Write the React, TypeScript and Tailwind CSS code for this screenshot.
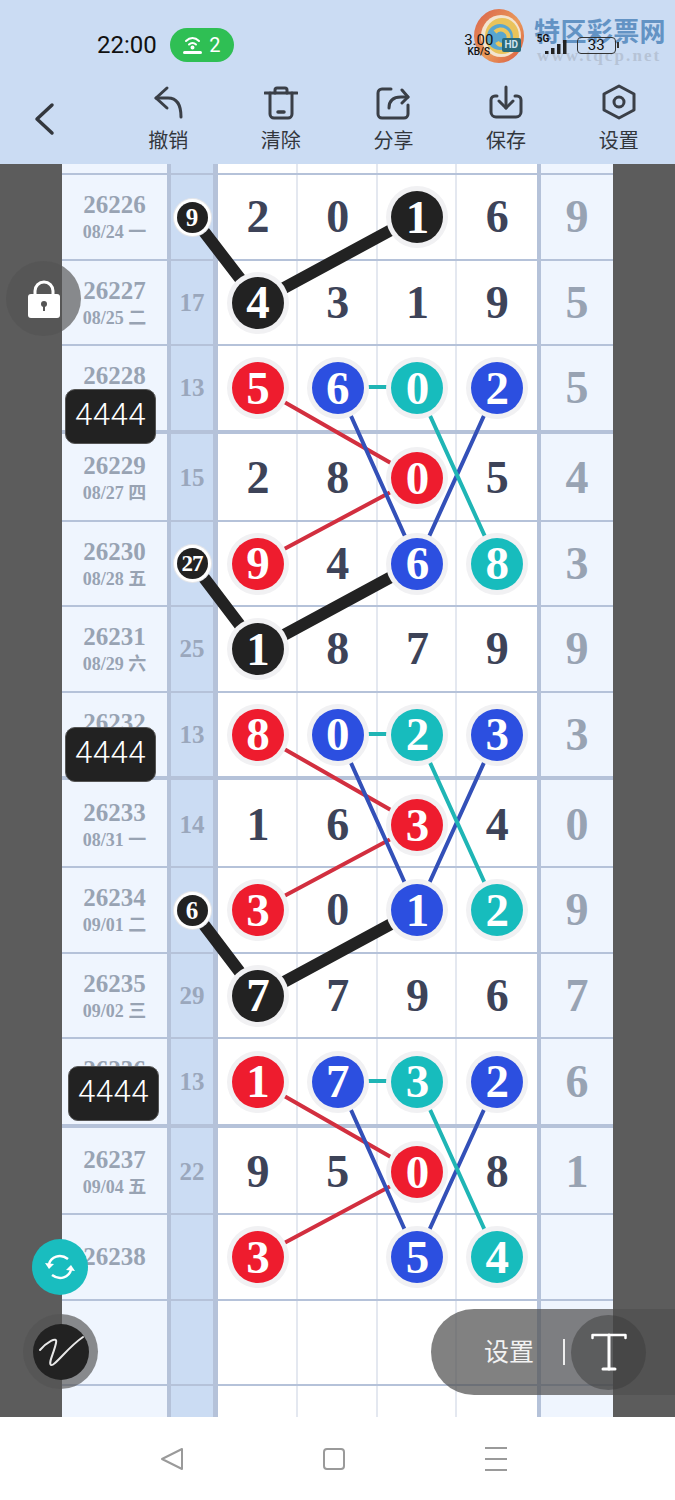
import React from "react";

type Color = "k" | "r" | "b" | "t";
type Cell = string | [string, Color];
type Row = {
  h: string;
  pad: string;
  thick?: boolean;
  id: string;
  date: string;
  sum: string;
  ball?: boolean;
  cells: Cell[];
  last: string;
};

const rows: Row[] = [
  { h: "h-[11px]", pad: "", id: "", date: "", sum: "", cells: ["", "", "", ""], last: "" },
  { h: "h-[86px]", pad: "", id: "26226", date: "08/24 一", sum: "9", ball: true, cells: ["2", "0", ["1", "k"], "6"], last: "9" },
  { h: "h-[85px]", pad: "", id: "26227", date: "08/25 二", sum: "17", cells: [["4", "k"], "3", "1", "9"], last: "5" },
  { h: "h-[88px]", pad: "", thick: true, id: "26228", date: "08/26 三", sum: "13", cells: [["5", "r"], ["6", "b"], ["0", "t"], ["2", "b"]], last: "5" },
  { h: "h-[88px]", pad: "pt-[2px]", id: "26229", date: "08/27 四", sum: "15", cells: ["2", "8", ["0", "r"], "5"], last: "4" },
  { h: "h-[85px]", pad: "", id: "26230", date: "08/28 五", sum: "27", ball: true, cells: [["9", "r"], "4", ["6", "b"], ["8", "t"]], last: "3" },
  { h: "h-[86px]", pad: "", id: "26231", date: "08/29 六", sum: "25", cells: [["1", "k"], "8", "7", "9"], last: "9" },
  { h: "h-[87px]", pad: "", thick: true, id: "26232", date: "08/30 日", sum: "13", cells: [["8", "r"], ["0", "b"], ["2", "t"], ["3", "b"]], last: "3" },
  { h: "h-[88px]", pad: "pt-[4px]", id: "26233", date: "08/31 一", sum: "14", cells: ["1", "6", ["3", "r"], "4"], last: "0" },
  { h: "h-[86px]", pad: "", id: "26234", date: "09/01 二", sum: "6", ball: true, cells: [["3", "r"], "0", ["1", "b"], ["2", "t"]], last: "9" },
  { h: "h-[85px]", pad: "", id: "26235", date: "09/02 三", sum: "29", cells: [["7", "k"], "7", "9", "6"], last: "7" },
  { h: "h-[89px]", pad: "", thick: true, id: "26236", date: "09/03 四", sum: "13", cells: [["1", "r"], ["7", "b"], ["3", "t"], ["2", "b"]], last: "6" },
  { h: "h-[87px]", pad: "pt-[3px]", id: "26237", date: "09/04 五", sum: "22", cells: ["9", "5", ["0", "r"], "8"], last: "1" },
  { h: "h-[86px]", pad: "", id: "26238", date: "", sum: "", cells: [["3", "r"], "", ["5", "b"], ["4", "t"]], last: "" },
  { h: "h-[85px]", pad: "", id: "", date: "", sum: "", cells: ["", "", "", ""], last: "" },
];

const ballColor: Record<Color, string> = {
  k: "bg-[#222222]",
  r: "bg-[#ee1c2e]",
  b: "bg-[#2c4fe0]",
  t: "bg-[#17bcbd]",
};

const SERIF = "font-['Liberation_Serif','Noto_Sans_CJK_SC',serif]";
const SANS = "font-['Roboto','Noto_Sans_CJK_SC',sans-serif]";

function Ball({ v, c }: { v: string; c: Color }) {
  return (
    <div
      className={`relative z-20 flex h-[52px] w-[52px] items-center justify-center rounded-full text-[47px] leading-none font-bold text-white shadow-[0_0_0_5px_#f1f1f3] ${ballColor[c]}`}
    >
      {v}
    </div>
  );
}

function TableRow({ row }: { row: Row }) {
  const bar = "bg-[#b5c2d9]";
  return (
    <div
      className={`box-border grid grid-cols-[105px_4px_42px_5px_319px_4px_72px] border-[#b5c2d9] ${row.h} ${
        row.thick ? "border-b-4" : "border-b-2"
      } ${SERIF}`}
    >
      <div className={`flex flex-col items-center justify-center bg-[#eff5fe] font-bold text-[#98a3b3] ${row.pad}`}>
        {row.id && <div className="text-[25px] leading-[30px]">{row.id}</div>}
        {row.date && <div className="text-[18px] leading-[24px]">{row.date}</div>}
      </div>
      <div className={bar} />
      <div className={`flex items-center justify-center bg-[#cbdcf3] text-[25px] font-bold text-[#9aa7bc] ${row.pad}`}>
        {row.ball ? (
          <div className="relative z-20 flex h-[31px] w-[31px] items-center justify-center rounded-full bg-[#222222] leading-none text-white shadow-[0_0_0_3px_#ffffff,0_0_0_4px_#e4e6ea]">
            <span className={row.sum.length > 1 ? "text-[23px] tracking-[-1px]" : "text-[25px]"}>{row.sum}</span>
          </div>
        ) : (
          row.sum
        )}
      </div>
      <div className={bar} />
      <div className="grid grid-cols-4 bg-white">
        {row.cells.map((cell, i) => (
          <div
            key={i}
            className={`flex items-center justify-center text-[46px] leading-none font-bold text-[#3d4358] ${row.pad} ${
              i < 3 ? "shadow-[inset_-2px_0_0_#e4e8f0]" : ""
            }`}
          >
            {typeof cell === "string" ? cell : <Ball v={cell[0]} c={cell[1]} />}
          </div>
        ))}
      </div>
      <div className={bar} />
      <div className={`flex items-center justify-center bg-[#eff5fe] text-[46px] leading-none font-bold text-[#98a3b3] ${row.pad}`}>
        {row.last}
      </div>
    </div>
  );
}

function BottomStub() {
  return (
    <div className="grid h-[31px] grid-cols-[105px_4px_42px_5px_319px_4px_72px]">
      <div className="bg-[#eff5fe]" />
      <div className="bg-[#b5c2d9]" />
      <div className="bg-[#cbdcf3]" />
      <div className="bg-[#b5c2d9]" />
      <div className="grid grid-cols-4 bg-white">
        <div className="shadow-[inset_-2px_0_0_#e4e8f0]" />
        <div className="shadow-[inset_-2px_0_0_#e4e8f0]" />
        <div className="shadow-[inset_-2px_0_0_#e4e8f0]" />
        <div />
      </div>
      <div className="bg-[#b5c2d9]" />
      <div className="bg-[#eff5fe]" />
    </div>
  );
}

function Lines() {
  const groups = [
    { k: [192, 216, 258, 302, 417, 216], r: [258, 387, 417, 478, 258, 563], b: [338, 387, 417, 563, 497, 387], t: [338, 387, 417, 387, 497, 563] },
    { k: [192, 562, 258, 649, 417, 563], r: [258, 734, 417, 825, 258, 910], b: [338, 734, 417, 910, 497, 734], t: [338, 734, 417, 734, 497, 910] },
    { k: [192, 909, 258, 996, 417, 910], r: [258, 1081, 417, 1172, 258, 1257], b: [338, 1081, 417, 1257, 497, 1081], t: [338, 1081, 417, 1081, 497, 1257] },
  ];
  return (
    <svg className="pointer-events-none absolute top-0 left-0 z-10" width="675" height="1500" fill="none">
      {groups.map((g, i) => (
        <g key={i}>
          <polyline points={g.k.join(" ")} stroke="#222222" strokeWidth="12" />
          <polyline points={g.r.join(" ")} stroke="#d22f3f" strokeWidth="4" />
          <polyline points={g.b.join(" ")} stroke="#3350b8" strokeWidth="4" />
          <polyline points={g.t.join(" ")} stroke="#1fb5b5" strokeWidth="4" />
        </g>
      ))}
    </svg>
  );
}

const iconProps = {
  width: 34,
  height: 38,
  viewBox: "0 0 34 38",
  fill: "none",
  stroke: "#3a3f47",
  strokeWidth: 3,
  strokeLinecap: "round" as const,
  strokeLinejoin: "round" as const,
};

const tools: { label: string; icon: React.ReactNode }[] = [
  {
    label: "撤销",
    icon: (
      <svg {...iconProps}>
        <path d="M16 4 L5 14 L16 24" />
        <path d="M5 14 H17 C25 14 30 20 30 33" />
      </svg>
    ),
  },
  {
    label: "清除",
    icon: (
      <svg {...iconProps}>
        <path d="M1 9 H33" />
        <path d="M11 9 V6 a2 2 0 0 1 2 -2 H21 a2 2 0 0 1 2 2 V9" />
        <path d="M6 9 V30 a4 4 0 0 0 4 4 H24 a4 4 0 0 0 4 -4 V9" />
        <path d="M14 28 H20" strokeWidth="3.5" />
      </svg>
    ),
  },
  {
    label: "分享",
    icon: (
      <svg {...iconProps}>
        <path d="M15 5 H6 a4 4 0 0 0 -4 4 V30 a4 4 0 0 0 4 4 H28 a4 4 0 0 0 4 -4 V21" />
        <path d="M13 24 C13 16 18 13 25 13 H32" />
        <path d="M26 6 L32 13 L26 19" />
      </svg>
    ),
  },
  {
    label: "保存",
    icon: (
      <svg {...iconProps}>
        <path d="M8 12 H6 a4 4 0 0 0 -4 4 V28 a5 5 0 0 0 5 5 H27 a5 5 0 0 0 5 -5 V16 a4 4 0 0 0 -4 -4 H26" />
        <path d="M17 3 V24" />
        <path d="M10 17 L17 24 L24 17" />
      </svg>
    ),
  },
  {
    label: "设置",
    icon: (
      <svg {...iconProps}>
        <path d="M17 2 L32 10 V26 L17 34 L2 26 V10 Z" />
        <circle cx="17" cy="18" r="5" />
      </svg>
    ),
  },
];

function Logo() {
  return (
    <div className="absolute top-[8px] left-[473px] flex items-start">
      <svg width="54" height="56" viewBox="0 0 54 56">
        <defs>
          <linearGradient id="lg1" x1="0" y1="0" x2="1" y2="1">
            <stop offset="0" stopColor="#d9604a" />
            <stop offset="0.55" stopColor="#ea9a5a" />
            <stop offset="1" stopColor="#d8553f" />
          </linearGradient>
        </defs>
        <ellipse cx="26" cy="28" rx="25" ry="27" fill="url(#lg1)" />
        <ellipse cx="28" cy="28" rx="20" ry="21" fill="#f3e4cf" />
        <ellipse cx="29" cy="28" rx="17" ry="18" fill="#e9c35a" />
        <circle cx="27" cy="29" r="13" fill="#58a6cf" />
        <path d="M22 24 C28 18 38 24 35 32 C33 38 26 38 24 34" fill="none" stroke="#edc65a" strokeWidth="4" />
      </svg>
      <div className="mt-[9px] ml-[7px] flex flex-col">
        <div className={`text-[26px] leading-[30px] font-bold tracking-[0.4px] whitespace-nowrap text-[#6393c4] ${SANS}`}>特区彩票网</div>
        <div className={`mt-[0px] pl-[3px] text-[17px] leading-[18px] font-bold tracking-[2.1px] whitespace-nowrap text-[#b6c3d6] ${SERIF}`}>
          www.tqcp.net
        </div>
      </div>
    </div>
  );
}

function StatusBar() {
  return (
    <div className={`relative flex h-[84px] items-center pt-[6px] pl-[97px] text-[#111111] ${SANS}`}>
      <Logo />
      <span className="relative text-[24px] leading-none">22:00</span>
      <div className="relative ml-[13px] flex h-[34px] w-[64px] items-center justify-center gap-[7px] rounded-full bg-[#2fbf54] text-[20px] text-white">
        <svg width="19" height="20" viewBox="0 0 19 20" fill="none" stroke="#ffffff" strokeWidth="2" strokeLinecap="round">
          <path d="M3 6 C7 2 12 2 16 6" />
          <path d="M6 9.5 C8 7.6 11 7.6 13 9.5" />
          <circle cx="9.5" cy="12.5" r="1" fill="#ffffff" />
          <path d="M1.5 17.5 H17.5" strokeWidth="3" />
        </svg>
        2
      </div>
      <div className="relative ml-[230px] flex w-[30px] flex-col items-center leading-none">
        <span className="text-[15px] leading-[14px]">3.00</span>
        <span className="text-[10px] leading-[10px] font-medium">KB/S</span>
      </div>
      <div className="relative ml-[8px] flex h-[14px] w-[19px] items-center justify-center rounded-[2px] bg-[#2b6a7a] text-[10px] leading-none font-bold text-[#cfe3f0]">
        HD
      </div>
      <div className="relative ml-[16px] h-[26px] w-[30px]">
        <span className="absolute top-[1px] left-[0px] text-[10px] leading-[11px] font-bold">5G</span>
        <svg className="absolute top-[8px] left-[8px]" width="22" height="14" viewBox="0 0 22 14" fill="#222222">
          <rect x="0" y="11" width="3.5" height="3" />
          <rect x="6" y="8" width="3.5" height="6" />
          <rect x="12" y="4" width="3.5" height="10" />
          <rect x="18" y="0" width="3.5" height="14" />
        </svg>
      </div>
      <div className="relative ml-[10px] flex h-[17px] w-[39px] items-center justify-center rounded-[4px] border border-[#333333] text-[15px] leading-none">
        33
      </div>
      <div className="relative ml-[1px] h-[6px] w-[2px] bg-[#333333]" />
    </div>
  );
}

function Toolbar() {
  return (
    <div className={`flex h-[80px] items-start ${SANS}`}>
      <div className="w-[112px] pt-[18px] pl-[33px]">
        <svg width="24" height="38" viewBox="0 0 24 38" fill="none" stroke="#33373d" strokeWidth="3.5" strokeLinecap="round" strokeLinejoin="round">
          <path d="M19 3 L4 17 L19 31" />
        </svg>
      </div>
      {tools.map((t) => (
        <div key={t.label} className="flex w-[112.75px] flex-col items-center">
          {t.icon}
          <span className="mt-[6px] text-[20px] leading-[26px] text-[#33373d]">{t.label}</span>
        </div>
      ))}
    </div>
  );
}

function Chip({ className }: { className: string }) {
  return (
    <div
      className={`absolute z-30 flex h-[55px] w-[91px] items-center justify-center rounded-[10px] border border-[#555555] bg-[#222222] pb-[3px] text-[31px] font-light tracking-[0.5px] text-white ${SANS} ${className}`}
    >
      4444
    </div>
  );
}

function Overlays() {
  return (
    <>
      <Chip className="top-[389px] left-[65px]" />
      <Chip className="top-[727px] left-[65px]" />
      <Chip className="top-[1066px] left-[68px]" />

      <div className="absolute top-[261px] left-[6px] z-30 flex h-[75px] w-[75px] items-center justify-center rounded-full bg-[rgba(83,83,83,0.67)]">
        <svg width="34" height="40" viewBox="0 0 34 40">
          <path d="M8 17 V12 a9 9 0 0 1 18 0 V17" fill="none" stroke="#ffffff" strokeWidth="3" />
          <rect x="1" y="15" width="32" height="24" rx="3" fill="#ffffff" />
          <circle cx="17" cy="25" r="3" fill="#555555" />
          <rect x="16" y="26" width="2" height="6" fill="#555555" />
        </svg>
      </div>

      <div className="absolute top-[1239px] left-[32px] z-30 flex h-[56px] w-[56px] items-center justify-center rounded-full bg-[#19bdbf]">
        <svg width="32" height="28" viewBox="0 0 32 28" fill="none" stroke="#ffffff" strokeWidth="2.5">
          <path d="M5 11 C7 4 16 0 24 6" />
          <path d="M27 17 C25 24 16 28 8 22" />
          <path d="M1 10 L5 16 L10 11 Z" fill="#ffffff" stroke="none" />
          <path d="M31 18 L27 12 L22 17 Z" fill="#ffffff" stroke="none" />
        </svg>
      </div>

      <div className="absolute top-[1314px] left-[23px] z-30 flex h-[75px] w-[75px] items-center justify-center rounded-full bg-[rgba(83,83,83,0.67)]">
        <div className="h-[56px] w-[56px] rounded-full bg-[#222222]">
          <svg width="56" height="56" viewBox="0 0 56 56" fill="none" stroke="#e8e8e8" strokeWidth="2" strokeLinecap="round">
            <path d="M7 26 C13 19 25 11 23 19 C21 29 15 39 18 41 C21 43 35 23 50 13" />
          </svg>
        </div>
      </div>

      <div className={`absolute top-[1309px] left-[431px] z-30 flex h-[86px] w-[244px] items-center rounded-l-full bg-[rgba(80,80,80,0.72)] pl-[53px] text-white ${SANS}`}>
        <span className="text-[25px] leading-none text-[#f2f2f2]">设置</span>
        <div className="ml-[29px] h-[26px] w-[2px] bg-[#eeeeee]" />
        <div className="ml-[6px] flex h-[75px] w-[75px] items-center justify-center rounded-full bg-[rgba(60,60,60,0.5)]">
          <svg width="36" height="38" viewBox="0 0 36 38" fill="none" stroke="#ffffff" strokeLinecap="round">
            <path d="M1.5 5 V2 H34.5 V5" strokeWidth="2.5" strokeLinejoin="round" />
            <path d="M18 2 V36" strokeWidth="3" />
            <path d="M12 36 H24" strokeWidth="3" />
          </svg>
        </div>
      </div>
    </>
  );
}

function NavBar() {
  return (
    <div className="flex h-[83px] items-center bg-white pl-[91px]">
      <div className="flex w-[162px] justify-center">
        <svg width="24" height="24" viewBox="0 0 24 24" fill="none" stroke="#9a9a9a" strokeWidth="2" strokeLinejoin="round">
          <path d="M22 2 V22 L2 12 Z" />
        </svg>
      </div>
      <div className="flex w-[162px] justify-center">
        <div className="h-[22px] w-[22px] rounded-[4px] border-2 border-[#9a9a9a]" />
      </div>
      <div className="flex w-[162px] flex-col items-center gap-[9px]">
        <div className="h-[2px] w-[22px] bg-[#9a9a9a]" />
        <div className="h-[2px] w-[22px] bg-[#9a9a9a]" />
        <div className="h-[2px] w-[22px] bg-[#9a9a9a]" />
      </div>
    </div>
  );
}

export default function App() {
  return (
    <div className="relative h-[1500px] w-[675px] overflow-hidden bg-white">
      <div className="h-[164px] bg-[#cbdcf3]">
        <StatusBar />
        <Toolbar />
      </div>
      <div className="h-[1253px] bg-[#5c5c5c] px-[62px]">
        {rows.map((r, i) => (
          <TableRow key={i} row={r} />
        ))}
        <BottomStub />
      </div>
      <NavBar />
      <Lines />
      <Overlays />
    </div>
  );
}
